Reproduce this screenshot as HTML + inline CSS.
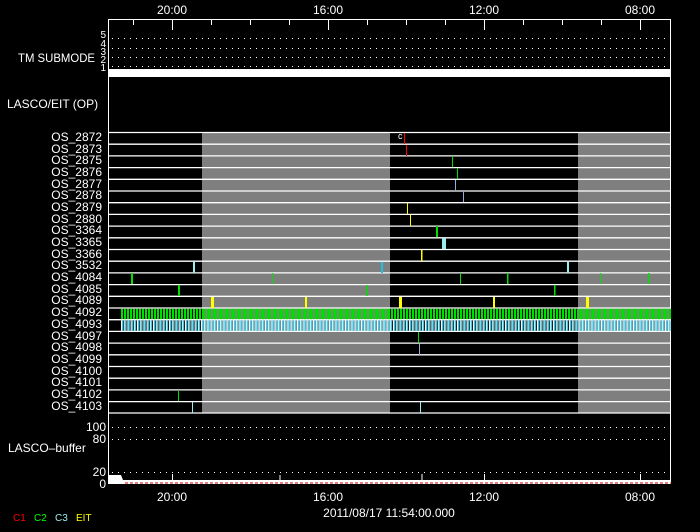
<!DOCTYPE html>
<html><head><meta charset="utf-8"><style>
html,body{margin:0;padding:0;background:#000;}
svg{display:block;}
text{font-family:"Liberation Sans",sans-serif;fill:#fff;font-size:12px;}
</style></head><body>
<svg width="700" height="532" viewBox="0 0 700 532" xmlns="http://www.w3.org/2000/svg">
<defs>
<pattern id="pg" x="121" y="0" width="3" height="20" patternUnits="userSpaceOnUse"><rect x="0" y="0" width="2" height="20" fill="#00e000"/></pattern>
<pattern id="pb" x="121" y="0" width="3.2" height="20" patternUnits="userSpaceOnUse"><rect x="0" y="0" width="1" height="20" fill="#fff"/><rect x="1" y="0" width="1.4" height="20" fill="#40d0f0"/></pattern>
</defs>
<rect width="700" height="532" fill="#000"/>
<text x="172" y="14" text-anchor="middle">20:00</text>
<text x="328" y="14" text-anchor="middle">16:00</text>
<text x="484" y="14" text-anchor="middle">12:00</text>
<text x="640" y="14" text-anchor="middle">08:00</text>
<rect x="202" y="132" width="188" height="281" fill="#7f7f7f"/>
<rect x="578" y="132" width="93" height="281" fill="#7f7f7f"/>
<rect x="108.5" y="19.5" width="562" height="464" fill="none" stroke="#fff"/>
<g stroke="#fff" stroke-width="1">
<path d="M133.5 20v5M172.5 20v10M211.5 20v5M250.5 20v5M289.5 20v5M328.5 20v10M367.5 20v5M406.5 20v5M445.5 20v5M484.5 20v10M523.5 20v5M562.5 20v5M601.5 20v5M640.5 20v10"/>
</g>
<g stroke="#fff" stroke-width="1" stroke-dasharray="1,5">
<path d="M112 38.5H669M112 48.5H669M112 57.5H669M112 66.5H669M112 427.5H669M112 439.5H669M112 472.5H669"/>
</g>
<rect x="109" y="69" width="562" height="8" fill="#fff"/>
<text x="106" y="38" text-anchor="end" style="font-size:10px">5</text>
<text x="106" y="47" text-anchor="end" style="font-size:10px">4</text>
<text x="106" y="55" text-anchor="end" style="font-size:10px">3</text>
<text x="106" y="63" text-anchor="end" style="font-size:10px">2</text>
<text x="106" y="71" text-anchor="end" style="font-size:10px">1</text>
<text x="18" y="62" textLength="77" lengthAdjust="spacingAndGlyphs">TM SUBMODE</text>
<text x="7" y="108">LASCO/EIT (OP)</text>
<g stroke="#fff" stroke-width="1.3">
<path d="M109 132.5H671M109 144.2H671M109 155.9H671M109 167.6H671M109 179.3H671M109 191H671M109 202.7H671M109 214.4H671M109 226.1H671M109 237.8H671M109 249.5H671M109 261.2H671M109 272.9H671M109 284.6H671M109 296.3H671M109 308H671M109 319.7H671M109 331.4H671M109 343.1H671M109 354.8H671M109 366.5H671M109 378.2H671M109 389.9H671M109 401.6H671M109 413H671"/>
</g>
<g text-anchor="end">
<text x="102" y="141">OS_2872</text><text x="102" y="153">OS_2873</text><text x="102" y="164">OS_2875</text><text x="102" y="176">OS_2876</text><text x="102" y="188">OS_2877</text><text x="102" y="199">OS_2878</text><text x="102" y="211">OS_2879</text><text x="102" y="223">OS_2880</text><text x="102" y="234">OS_3364</text><text x="102" y="246">OS_3365</text><text x="102" y="258">OS_3366</text><text x="102" y="269">OS_3532</text><text x="102" y="281">OS_4084</text><text x="102" y="293">OS_4085</text><text x="102" y="304">OS_4089</text><text x="102" y="316">OS_4092</text><text x="102" y="328">OS_4093</text><text x="102" y="340">OS_4097</text><text x="102" y="351">OS_4098</text><text x="102" y="363">OS_4099</text><text x="102" y="375">OS_4100</text><text x="102" y="386">OS_4101</text><text x="102" y="398">OS_4102</text><text x="102" y="410">OS_4103</text>
</g>
<text x="398" y="139" style="font-size:9px">c</text>
<rect x="404" y="133" width="1" height="11" fill="#f00"/>
<rect x="406" y="145" width="1" height="11" fill="#f00"/>
<rect x="452" y="156" width="1" height="11" fill="#00e000"/>
<rect x="457" y="168" width="1" height="11" fill="#00e000"/>
<rect x="455" y="180" width="1" height="11" fill="#9ad"/>
<rect x="463" y="191" width="1" height="11" fill="#9ad"/>
<rect x="407" y="203" width="1" height="11" fill="#ff0"/>
<rect x="410" y="215" width="1" height="11" fill="#ff0"/>
<rect x="436" y="226" width="2" height="11" fill="#00e000"/>
<rect x="442" y="238" width="4" height="11" fill="#9ee"/>
<rect x="421" y="250" width="1.5" height="11" fill="#ff0"/>
<rect x="193" y="262" width="2" height="11" fill="#9ee"/><rect x="381" y="262" width="2" height="11" fill="#20c0e0"/><rect x="567" y="262" width="2" height="11" fill="#9ee"/>
<g fill="#00e000"><rect x="131" y="273" width="2" height="11"/><rect x="272" y="273" width="1" height="11"/><rect x="460" y="273" width="1" height="11"/><rect x="507" y="273" width="1.5" height="11"/><rect x="600" y="273" width="1" height="11"/><rect x="648" y="273" width="1.5" height="11"/>
<rect x="178" y="285" width="2" height="11"/><rect x="366" y="285" width="1.5" height="11"/><rect x="554" y="285" width="1.5" height="11"/></g>
<g fill="#ff0"><rect x="211" y="297" width="3" height="11"/><rect x="305" y="297" width="2" height="11"/><rect x="399" y="297" width="3" height="11"/><rect x="493" y="297" width="2" height="11"/><rect x="586" y="297" width="3" height="11"/></g>
<rect x="121" y="308.7" width="550" height="10.5" fill="url(#pg)"/>
<rect x="121" y="320.4" width="550" height="10.5" fill="url(#pb)"/>
<rect x="418" y="332" width="1" height="11" fill="#00e000"/>
<rect x="419" y="344" width="1" height="11" fill="#9ad"/>
<rect x="178" y="391" width="1" height="10" fill="#00e000"/>
<rect x="192" y="402" width="1" height="11" fill="#9ee"/>
<rect x="420" y="402" width="1" height="11" fill="#9ee"/>
<text x="106" y="431" text-anchor="end">100</text>
<text x="106" y="443" text-anchor="end">80</text>
<text x="8" y="452">LASCO–buffer</text>
<text x="106" y="476" text-anchor="end">20</text>
<text x="106" y="488" text-anchor="end">0</text>
<polygon points="109,483 109,475 121,475 123,480 671,480 671,483" fill="#fff"/>
<path d="M125 483H671" stroke="#c00" stroke-width="1" stroke-dasharray="3,2"/>
<path d="M172.5 474v6M280 475v5M422 474v6M484.5 474v6M640.5 474v6" stroke="#fff"/>
<text x="172" y="501" text-anchor="middle">20:00</text>
<text x="328" y="501" text-anchor="middle">16:00</text>
<text x="484" y="501" text-anchor="middle">12:00</text>
<text x="640" y="501" text-anchor="middle">08:00</text>
<text x="389" y="517" text-anchor="middle">2011/08/17 11:54:00.000</text>
<text x="13" y="521" style="fill:#f00;font-size:10px">C1</text>
<text x="34" y="521" style="fill:#0f0;font-size:10px">C2</text>
<text x="55" y="521" style="fill:#9ee;font-size:10px">C3</text>
<text x="76" y="521" style="fill:#ff0;font-size:10px">EIT</text>
</svg>
</body></html>
